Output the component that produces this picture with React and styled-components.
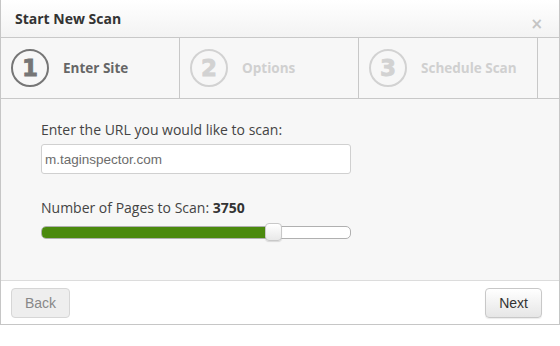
import React from "react"
import styled, { createGlobalStyle } from "styled-components"

const GlobalStyle = createGlobalStyle`
  html, body {
    margin: 0;
    padding: 0;
    background: #fff;
  }
  body {
    font-family: "Open Sans", "Liberation Sans", sans-serif;
  }
`

const steps = [
  { n: 1, label: "Enter Site", active: true },
  { n: 2, label: "Options" },
  { n: 3, label: "Schedule Scan" },
]

const App = () => {
  const pages = 3750
  const fill = 75

  return (
    <>
      <GlobalStyle />
      <Modal>
        <Header>
          <h3>Start New Scan</h3>
          <Close>×</Close>
        </Header>
        <Steps>
          {steps.map((s) => (
            <Step key={s.n} $active={s.active}>
              <Circle $active={s.active}>{s.n}</Circle>
              <span>{s.label}</span>
            </Step>
          ))}
          <StepRest />
        </Steps>
        <Body>
          <Label>Enter the URL you would like to scan:</Label>
          <Input defaultValue="m.taginspector.com" />
          <Label className="pages">
            Number of Pages to Scan: <b>{pages}</b>
          </Label>
          <Slider>
            <Fill style={{ width: `${fill}%` }} />
            <Handle style={{ left: `${fill}%` }} />
          </Slider>
        </Body>
        <Footer>
          <Button disabled>Back</Button>
          <Button>Next</Button>
        </Footer>
      </Modal>
    </>
  )
}

const Modal = styled.div`
  width: 558px;
  border: 1px solid #c6c6c6;
  border-top: none;
  background: #fff;
`

const Header = styled.div`
  height: 37px;
  display: flex;
  align-items: center;
  justify-content: space-between;
  padding: 0 16px 0 14px;
  box-sizing: border-box;
  background: linear-gradient(#ffffff, #f3f3f3);
  h3 {
    margin: 0;
    font-size: 14px;
    font-weight: 700;
    color: #333;
    margin-top: -1px;
  }
`

const Close = styled.span`
  font-family: "DejaVu Sans", sans-serif;
  font-size: 15px;
  font-weight: 700;
  color: #c4c4c4;
  margin-top: 12px;
  line-height: 1;
`

const Steps = styled.div`
  display: flex;
  height: 60px;
  border-top: 1px solid #c8c8c8;
  border-bottom: 1px solid #c8c8c8;
  background: #f7f7f7;
`

const Step = styled.div`
  flex: none;
  width: 168px;
  padding-left: 10px;
  border-right: 1px solid #c8c8c8;
  display: flex;
  align-items: center;
  span {
    margin-left: 14px;
    font-size: 13.5px;
    font-weight: 700;
    color: ${(p) => (p.$active ? "#666" : "#d0d0d0")};
  }
`

const StepRest = styled.div`
  flex: 1;
`

const Circle = styled.div`
  width: 34px;
  height: 34px;
  border-radius: 50%;
  border: 2px solid ${(p) => (p.$active ? "#767676" : "#d2d2d2")};
  color: ${(p) => (p.$active ? "#767676" : "#d2d2d2")};
  display: flex;
  align-items: center;
  justify-content: center;
  font-family: "DejaVu Sans", sans-serif;
  font-size: 23px;
  font-weight: 700;
  line-height: 1;
  -webkit-text-stroke: 0.8px currentColor;
`

const Body = styled.div`
  background: #f7f7f7;
  padding: 21px 40px 0;
  height: 182px;
  box-sizing: border-box;
  border-bottom: 1px solid #dcdcdc;
  .pages {
    margin-top: 24px;
  }
  b {
    font-weight: 700;
    color: #333;
  }
`

const Label = styled.div`
  font-size: 14px;
  color: #444;
  line-height: 20px;
`

const Input = styled.input`
  display: block;
  margin-top: 4px;
  width: 310px;
  height: 30px;
  box-sizing: border-box;
  border: 1px solid #d0d0d0;
  border-radius: 3px;
  background: #fff;
  padding: 0 3px;
  font-family: "Liberation Sans", sans-serif;
  font-size: 13.5px;
  color: #6c6c6c;
  outline: none;
`

const Slider = styled.div`
  position: relative;
  margin-top: 8px;
  width: 310px;
  height: 13px;
  box-sizing: border-box;
  border: 1px solid #b0b0b0;
  border-radius: 5px;
  background: #fff;
`

const Fill = styled.div`
  height: 100%;
  background: #4b8a0e;
  border-radius: 4px 0 0 4px;
`

const Handle = styled.div`
  position: absolute;
  top: -4px;
  margin-left: -8px;
  width: 17px;
  height: 18px;
  box-sizing: border-box;
  border: 1px solid #c8c8c8;
  border-radius: 4px;
  background: linear-gradient(#ffffff, #e8e8e8);
  box-shadow: 0 1px 1px rgba(0, 0, 0, 0.12);
`

const Footer = styled.div`
  display: flex;
  justify-content: space-between;
  padding: 7px 17px 6px 10px;
  background: #fff;
`

const Button = styled.button`
  height: 30px;
  padding: 0 13px;
  border: 1px solid #c8c8c8;
  border-radius: 4px;
  background: linear-gradient(#ffffff, #e6e6e6);
  font-family: "Liberation Sans", sans-serif;
  font-size: 14px;
  color: #333;
  box-shadow: 0 1px 1px rgba(0, 0, 0, 0.08);
  &:disabled {
    background: #eeeeee;
    color: #888;
    box-shadow: none;
    border-color: #d6d6d6;
  }
`

export default App
